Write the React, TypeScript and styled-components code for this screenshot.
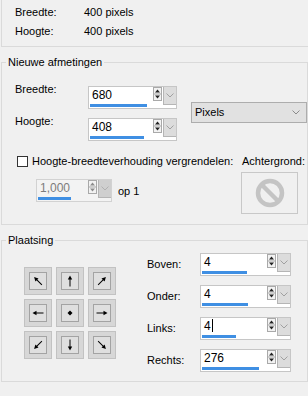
import React from "react";
import styled, { createGlobalStyle } from "styled-components";

const GlobalStyle = createGlobalStyle`
  html, body {
    margin: 0;
    padding: 0;
    background: #f0f0f0;
    overflow: hidden;
  }
  body {
    font-family: "Liberation Sans", Arial, sans-serif;
    font-size: 11px;
    color: #000;
  }
  #root {
    width: 308px;
    height: 396px;
    overflow: hidden;
  }
`;

//top info
const InfoBox = styled.div`
  margin-left: 1px;
  height: 38px;
  padding: 3px 0 5px 13px;
  border-left: 1px solid #dadada;
  border-bottom: 1px solid #dadada;
`;

const InfoRow = styled.div`
  display: grid;
  grid-template-columns: 69px auto;
  line-height: 19px;
`;

//group boxes
const Group = styled.fieldset`
  box-sizing: border-box;
  width: 307px;
  min-width: 0;
  margin: 9px 0 0 1px;
  padding: 0;
  border: 1px solid #dadada;
`;

const Legend = styled.legend`
  margin-left: 4px;
  padding: 0 2px;
  line-height: 13px;
  font-size: 11px;
`;

const SizeBody = styled.div`
  padding: 14px 0 10px 13px;
`;

const SizeGrid = styled.div`
  display: grid;
  grid-template-columns: 73px 89px 130px;
  grid-template-rows: 26px 26px;
  row-gap: 6px;
  align-items: start;
`;

const Label = styled.span`
  line-height: 13px;
`;

const SpinSlot = styled.div`
  padding-top: 3px;
`;

const SelectBox = styled.div`
  grid-column: 3;
  grid-row: 1 / span 2;
  align-self: center;
  box-sizing: border-box;
  width: 116px;
  height: 21px;
  margin-left: 14px;
  display: flex;
  align-items: center;
  justify-content: space-between;
  padding: 0 6px 0 3px;
  background: #e1e1e1;
  border: 1px solid #adadad;
`;

const Options = styled.div`
  display: flex;
  margin-top: 14px;
`;

const OptionsLeft = styled.div`
  width: 226px;
`;

const CheckRow = styled.label`
  display: flex;
  align-items: center;
  gap: 4px;
  height: 13px;
  padding-left: 2px;
  line-height: 13px;
`;

const CheckBox = styled.span`
  box-sizing: border-box;
  width: 11px;
  height: 11px;
  background: #fff;
  border: 1px solid #333;
`;

const RatioRow = styled.div`
  display: flex;
  align-items: center;
  gap: 6px;
  margin-top: 11px;
  padding-left: 21px;
`;

const BgColumn = styled.div`
  display: flex;
  flex-direction: column;
  gap: 4px;
  line-height: 13px;
  & > span {
    padding-left: 1px;
  }
`;

const BgBox = styled.div`
  box-sizing: border-box;
  width: 57px;
  height: 42px;
  display: flex;
  align-items: center;
  justify-content: center;
  border: 1px solid #c8c8c8;
`;

//placement
const PlaceBody = styled.div`
  display: flex;
  align-items: center;
  padding: 6px 0 9px 22px;
`;

const AnchorGrid = styled.div`
  display: grid;
  grid-template-columns: repeat(3, 28px);
  grid-auto-rows: 28px;
  gap: 4px;
`;

const AnchorBtn = styled.button`
  box-sizing: border-box;
  width: 28px;
  height: 28px;
  padding: 0;
  display: flex;
  align-items: center;
  justify-content: center;
  background: #d7d7d7;
  border: 1px solid #c2c2c2;
`;

const AnchorFace = styled.span`
  box-sizing: border-box;
  width: 18px;
  height: 18px;
  display: flex;
  align-items: center;
  justify-content: center;
  background: #dfdfdf;
  border: 1px solid #a3a3a3;
`;

const MarginGrid = styled.div`
  display: grid;
  grid-template-columns: 53px 91px;
  grid-auto-rows: 23px;
  row-gap: 9px;
  align-items: center;
  margin-left: 31px;
`;

//spin control
const SpinBox = styled.div<{ $w: number; $disabled?: boolean }>`
  box-sizing: border-box;
  display: flex;
  width: ${(p) => p.$w}px;
  height: 23px;
  background: ${(p) => (p.$disabled ? "#f3f3f3" : "#fff")};
  border: 1px solid ${(p) => (p.$disabled ? "#d2d2d2" : "#c6c6c6")};
`;

const Field = styled.div`
  flex: 1;
  display: flex;
  flex-direction: column;
  padding: 1px 0 1px 1px;
`;

const Value = styled.span<{ $disabled?: boolean }>`
  padding-left: 2px;
  font-size: 12px;
  line-height: 14px;
  height: 14px;
  color: ${(p) => (p.$disabled ? "#7c7c7c" : "#000")};
`;

const Caret = styled.span`
  display: inline-block;
  width: 1px;
  height: 13px;
  margin-left: 1px;
  vertical-align: top;
  background: #000;
`;

const Bar = styled.div`
  margin-top: auto;
  height: 3px;
  background: #3f8fe3;
`;

const Stepper = styled.svg`
  flex: none;
  margin-right: 1px;
`;

const DropBtn = styled.div<{ $disabled?: boolean }>`
  box-sizing: border-box;
  width: 13px;
  height: 18px;
  display: flex;
  align-items: center;
  justify-content: center;
  background: ${(p) => (p.$disabled ? "#cfcfcf" : "#dcdcdc")};
  border-left: 1px solid #b5b5b5;
  border-bottom: 1px solid #b5b5b5;
`;

function Chevron({ color = "#a0a0a0" }: { color?: string }) {
  return (
    <svg width="8" height="5" viewBox="0 0 8 5">
      <polyline points="0.5,0.5 4,4 7.5,0.5" fill="none" stroke={color} strokeWidth="1" />
    </svg>
  );
}

type SpinProps = {
  value: string;
  width: number;
  fill: number;
  disabled?: boolean;
  caret?: boolean;
};

function Spin({ value, width, fill, disabled, caret }: SpinProps) {
  const arrow = disabled ? "#8c8c8c" : "#222";
  return (
    <SpinBox $w={width} $disabled={disabled}>
      <Field>
        <Value $disabled={disabled}>
          {value}
          {caret && <Caret />}
        </Value>
        <Bar style={{ width: fill }} />
      </Field>
      <Stepper width="9" height="14" viewBox="0 0 9 14">
        <rect x="0.5" y="0.5" width="8" height="13" fill="#f2f2f2" stroke="#a9a9a9" />
        <line x1="1" y1="7" x2="8" y2="7" stroke="#a9a9a9" />
        <polygon points="4.5,2.5 2,5.5 7,5.5" fill={arrow} />
        <polygon points="2,8.5 7,8.5 4.5,11.5" fill={arrow} />
      </Stepper>
      <DropBtn $disabled={disabled}>
        <Chevron color={disabled ? "#b0b0b0" : "#a0a0a0"} />
      </DropBtn>
    </SpinBox>
  );
}

function NoIcon() {
  return (
    <svg width="32" height="32" viewBox="0 0 32 32">
      <circle cx="16" cy="16" r="12" fill="none" stroke="#c4c4c4" strokeWidth="4.5" />
      <line x1="7.5" y1="7.5" x2="24.5" y2="24.5" stroke="#c4c4c4" strokeWidth="4.5" />
    </svg>
  );
}

const anchors = [315, 0, 45, 270, -1, 90, 225, 180, 135];

function AnchorIcon({ angle }: { angle: number }) {
  return (
    <svg width="16" height="16" viewBox="0 0 16 16">
      {angle < 0 ? (
        <polygon points="8,5.5 10.5,8 8,10.5 5.5,8" fill="#000" />
      ) : (
        <g transform={`rotate(${angle} 8 8)`}>
          <line x1="8" y1="13.5" x2="8" y2="5" stroke="#000" strokeWidth="1" />
          <polygon points="8,2.5 5.8,6.5 10.2,6.5" fill="#000" />
        </g>
      )}
    </svg>
  );
}

const margins = [
  { label: "Boven:", value: "4", fill: 45 },
  { label: "Onder:", value: "4", fill: 46 },
  { label: "Links:", value: "4", fill: 34, caret: true },
  { label: "Rechts:", value: "276", fill: 57 },
];

export default function App() {
  return (
    <>
      <GlobalStyle />
      <InfoBox>
        <InfoRow>
          <span>Breedte:</span>
          <span>400 pixels</span>
        </InfoRow>
        <InfoRow>
          <span>Hoogte:</span>
          <span>400 pixels</span>
        </InfoRow>
      </InfoBox>

      <Group>
        <Legend>Nieuwe afmetingen</Legend>
        <SizeBody>
          <SizeGrid>
            <Label>Breedte:</Label>
            <SpinSlot>
              <Spin value="680" width={89} fill={57} />
            </SpinSlot>
            <SelectBox>
              <span>Pixels</span>
              <Chevron color="#8a8a8a" />
            </SelectBox>
            <Label>Hoogte:</Label>
            <SpinSlot>
              <Spin value="408" width={89} fill={54} />
            </SpinSlot>
          </SizeGrid>
          <Options>
            <OptionsLeft>
              <CheckRow>
                <CheckBox />
                <span>Hoogte-breedteverhouding vergrendelen:</span>
              </CheckRow>
              <RatioRow>
                <Spin value="1,000" width={76} fill={33} disabled />
                <span>op 1</span>
              </RatioRow>
            </OptionsLeft>
            <BgColumn>
              <span>Achtergrond:</span>
              <BgBox>
                <NoIcon />
              </BgBox>
            </BgColumn>
          </Options>
        </SizeBody>
      </Group>

      <Group>
        <Legend>Plaatsing</Legend>
        <PlaceBody>
          <AnchorGrid>
            {anchors.map((a, i) => (
              <AnchorBtn key={i}>
                <AnchorFace>
                  <AnchorIcon angle={a} />
                </AnchorFace>
              </AnchorBtn>
            ))}
          </AnchorGrid>
          <MarginGrid>
            {margins.map((m) => (
              <React.Fragment key={m.label}>
                <Label>{m.label}</Label>
                <Spin value={m.value} width={91} fill={m.fill} caret={m.caret} />
              </React.Fragment>
            ))}
          </MarginGrid>
        </PlaceBody>
      </Group>
    </>
  );
}
